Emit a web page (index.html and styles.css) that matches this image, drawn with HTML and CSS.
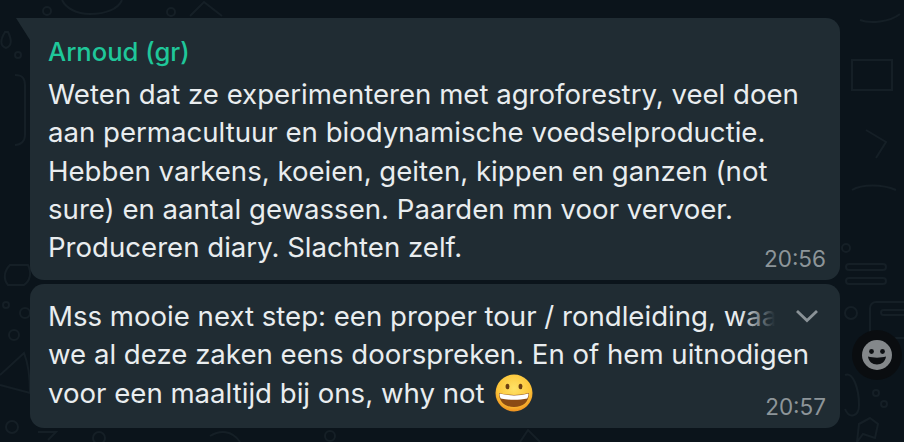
FILE: index.html
```html
<!DOCTYPE html>
<html lang="en">

<head>
    <meta charset="UTF-8">
    <title>Chat</title>
    <link rel="stylesheet" href="styles.css">
</head>

<body>
    <!-- faint wallpaper doodles -->
    <svg class="wallpaper" width="904" height="442" viewBox="0 0 904 442" fill="none">
        <circle cx="47" cy="11" r="4"/>
        <circle cx="171" cy="12" r="4"/>
        <path d="M62 0c4 8 14 14 28 14c16 0 28-5 32-14"/>
        <path d="M190 16l14-14l18 14"/>
        <circle cx="18" cy="55" r="3"/>
        <path d="M5 32c-5 8-5 14 1 16c6-2 6-8 2-16z"/>
        <path d="M15 75c8 0 10 4 10 10v50c0 6-4 10-10 10"/>
        <path d="M10 265h18c4 8 2 16-4 20h-16c-5-6-4-14 2-20z"/>
        <circle cx="6" cy="305" r="3"/>
        <circle cx="25" cy="313" r="5"/>
        <circle cx="14" cy="335" r="5"/>
        <path d="M0 375l24-22c4 10 6 24 6 40l-30-8"/>
        <circle cx="12" cy="427" r="6"/>
        <circle cx="99" cy="438" r="6"/>
        <path d="M38 432h18l-8 8"/>
        <rect x="846" y="264" width="40" height="6" rx="3"/>
        <rect x="846" y="278" width="40" height="6" rx="3"/>
        <circle cx="851" cy="313" r="6"/>
        <rect x="870" y="302" width="40" height="36" rx="6"/>
        <rect x="881" y="310" width="30" height="5" rx="2.5"/>
        <circle cx="846" cy="248" r="4"/>
        <path d="M845 375c8-4 14 14 14 30c0 12-10 14-14 4"/>
        <circle cx="876" cy="393" r="3"/>
        <circle cx="884" cy="404" r="3"/>
        <path d="M870 418l8 6l-3 14l-12-4l-6 8l2-18z"/>
        <path d="M860 20c10 4 30 2 40-6"/>
        <path d="M852 60h40v30h-40z"/>
        <path d="M866 130l20 12l-10 16"/>
        <path d="M852 190c10-6 30-6 44 0"/>
        <path d="M210 436c10-6 22-6 30 6"/>
        <circle cx="330" cy="436" r="5"/>
        <path d="M520 442l8-12l12 12"/>
    </svg>

    <main class="chat">
        <article class="bubble bubble-first">
            <h2 class="sender">Arnoud (gr)</h2>
            <p class="message">Weten dat ze experimenteren met agroforestry, veel doen<br>
                aan permacultuur en biodynamische voedselproductie.<br>
                Hebben varkens, koeien, geiten, kippen en ganzen (not<br>
                sure) en aantal gewassen. Paarden mn voor vervoer.<br>
                Produceren diary. Slachten zelf.</p>
            <time class="stamp">20:56</time>
        </article>

        <article class="bubble bubble-second">
            <p class="message">Mss mooie next step: een proper tour / rondleiding, waar<br>
                we al deze zaken eens doorspreken. En of hem uitnodigen<br>
                voor een maaltijd bij ons, why not <svg class="emoji" width="38" height="38" viewBox="0 0 38 38">
                    <defs>
                        <radialGradient id="face" cx="50%" cy="38%" r="62%">
                            <stop offset="0" stop-color="#ffe266"/>
                            <stop offset="0.7" stop-color="#fcc63a"/>
                            <stop offset="1" stop-color="#ee8f1e"/>
                        </radialGradient>
                    </defs>
                    <circle cx="19" cy="19" r="18.500" fill="url(#face)"/>
                    <ellipse cx="12.500" cy="12.500" rx="1.900" ry="2.800" fill="#6b3d12"/>
                    <ellipse cx="25.500" cy="12.500" rx="1.900" ry="2.800" fill="#6b3d12"/>
                    <path d="M4 19c9 2.500 21 2.500 30 0c0 9-6 14-15 14s-15-5-15-14z" fill="#8a4a14"/>
                    <path d="M4.500 19.500c9 2.500 20 2.500 29 0c0 2-.4 3.500-1.200 5c-8 1.800-18.600 1.800-26.600 0c-.8-1.500-1.200-3-1.200-5z" fill="#fff"/>
                </svg></p>
            <div class="menu-fade">
                <svg width="24" height="14" viewBox="0 0 24 14" fill="none">
                    <path d="M2 2l10 9.500L22 2" stroke="#8a9297" stroke-width="2.800"/>
                </svg>
            </div>
            <time class="stamp">20:57</time>
        </article>
    </main>

    <button class="react" type="button">
        <svg width="30" height="30" viewBox="0 0 30 30">
            <circle cx="15" cy="15" r="15" fill="#84888b"/>
            <circle cx="9.500" cy="11.500" r="2.400" fill="#0c0f12"/>
            <circle cx="20.500" cy="11.500" r="2.400" fill="#0c0f12"/>
            <path d="M6 16.500c5 1.500 13 1.500 18 0c-.5 5-4.500 8-9 8s-8.500-3-9-8z" fill="#0c0f12"/>
        </svg>
    </button>
</body>

</html>
```

FILE: styles.css
```css
body {
    margin: 0;
    width: 904px;
    height: 442px;
    overflow: hidden;
    position: relative;
    background-color: #0b141b;
    font-family: Inter, "Liberation Sans", sans-serif;
}

.wallpaper {
    position: absolute;
    top: 0;
    left: 0;
}

.wallpaper * {
    stroke: #151f26;
    stroke-width: 2;
}

.chat {
    position: relative;
    display: flex;
    flex-direction: column;
    gap: 4px;
    width: 810px;
    padding: 18px 0 0 30px;
}

.bubble {
    position: relative;
    background-color: #202c33;
    border-radius: 14px;
    padding: 0 18px;
}

.bubble-first {
    height: 262px;
    border-top-left-radius: 0;
}

/* tail on the first message */
.bubble-first::before {
    content: "";
    position: absolute;
    top: 0;
    left: -14px;
    border-top: 22px solid #202c33;
    border-left: 14px solid transparent;
}

.bubble-second {
    height: 144px;
}

.sender {
    margin: 0;
    padding-top: 19px;
    font-size: 25.600px;
    line-height: 30px;
    font-weight: 500;
    color: #1fc79a;
}

.message {
    margin: 0;
    font-size: 27.600px;
    line-height: 38.300px;
    color: #e9edef;
    white-space: nowrap;
}

.bubble-first .message {
    padding-top: 8px;
}

.bubble-second .message {
    padding-top: 13px;
}

.emoji {
    vertical-align: -9px;
    margin-left: 3px;
}

.stamp {
    position: absolute;
    right: 14px;
    bottom: 8px;
    font-size: 22.500px;
    line-height: 26px;
    color: #8d9599;
}

.menu-fade {
    position: absolute;
    top: 14px;
    right: 0;
    width: 100px;
    height: 36px;
    display: flex;
    align-items: center;
    justify-content: flex-end;
    padding-right: 21px;
    box-sizing: border-box;
    background: linear-gradient(to right, rgba(32, 44, 51, 0) 0, #202c33 35%);
    border-top-right-radius: 14px;
}

.react {
    position: absolute;
    top: 330px;
    left: 852px;
    width: 50px;
    height: 50px;
    padding: 0;
    border: 0;
    border-radius: 50%;
    background-color: #0a0d10;
    display: flex;
    align-items: center;
    justify-content: center;
}
```
